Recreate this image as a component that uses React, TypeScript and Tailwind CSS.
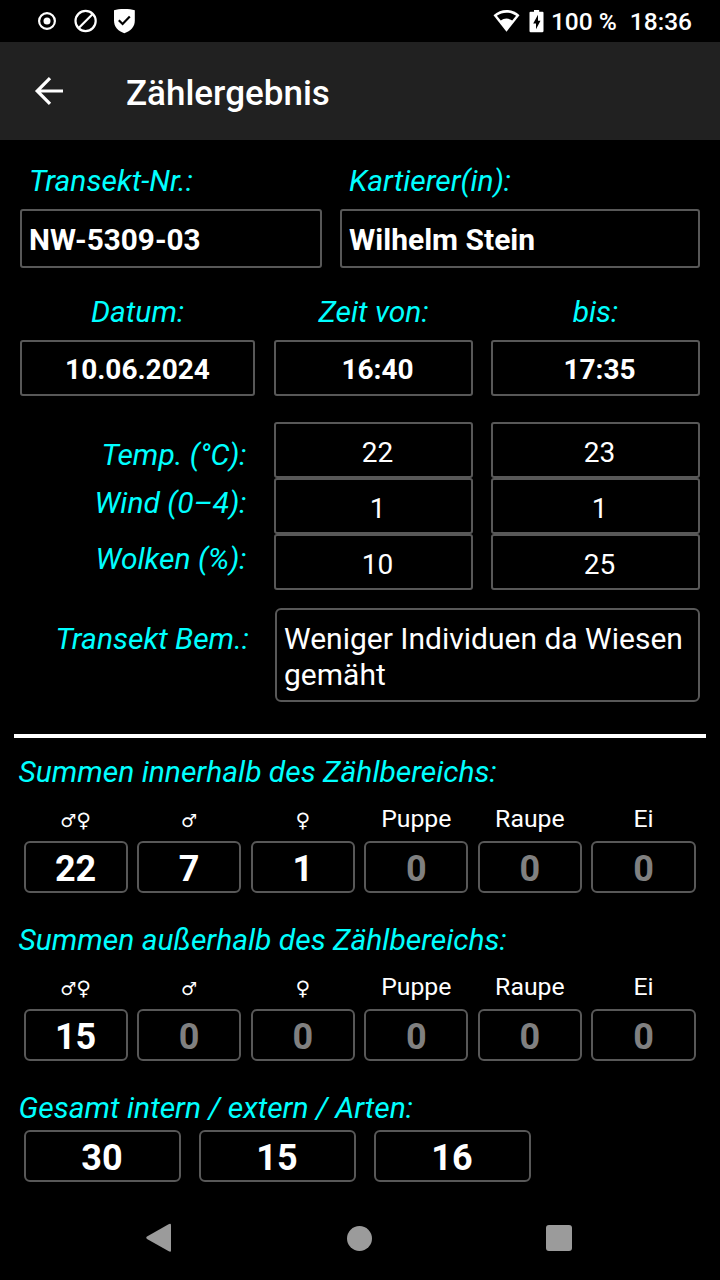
import type { ReactNode } from "react";

function Label({ children, className = "" }: { children: ReactNode; className?: string }) {
  return (
    <div className={`whitespace-nowrap text-[30px] leading-9 italic text-[#00ffff] ${className}`}>
      {children}
    </div>
  );
}

function Field({ children, className = "" }: { children: ReactNode; className?: string }) {
  return (
    <div className={`flex items-center rounded-[3px] border-2 border-[#585858] ${className}`}>
      {children}
    </div>
  );
}

function StatusBar() {
  return (
    <div className="flex h-[42px] items-center justify-between pr-7 pl-9">
      <svg width="104" height="42" viewBox="36 0 104 42" fill="none" stroke="white">
        <circle cx="47" cy="21" r="7.900" strokeWidth="2.2" />
        <circle cx="47" cy="21" r="3.5" fill="white" stroke="none" />
        <circle cx="85.6" cy="21" r="10.1" strokeWidth="2.2" />
        <path d="M78.5 28.2 92.7 14" strokeWidth="2.2" />
        <path
          d="M124.3 9C120 9 116.500 9.500 114 10.200V20.500C114 27 118 31 124.300 33.200C130.600 31 134.800 27 134.800 20.500V10.200C132 9.500 128.600 9 124.300 9Z"
          fill="white"
          stroke="none"
        />
        <path d="M118.8 20.300 122.600 24 129.800 16.600" stroke="black" strokeWidth="2.2" />
      </svg>
      <div className="flex items-center">
        <svg width="54" height="42" viewBox="491.500 0 54 42">
          <path d="M494 15.300C501.500 8.300 512.500 8.300 520 15.300L507 31.700Z" fill="white" />
          <path d="M497.400 15.800C503 11.600 511 11.600 516.600 15.800L512.700 20.600C509.500 17.800 504.500 17.800 501.300 20.600Z" fill="black" />
          <path
            d="M534.500 10V11.800H531Q530 11.800 530 12.800V31Q530 32.300 531.200 32.300H542.600Q544 32.300 544 31V12.800Q544 11.800 543 11.800H539.700V10Z"
            fill="white"
          />
          <path d="M538.500 14.800 533.700 23.500H536.500V29.300L541 20.800H538.500Z" fill="black" />
        </svg>
        <div className="ml-[6px] pt-[2px] text-[24.5px] leading-[42px] font-medium whitespace-pre">100 %</div>
        <div className="ml-[13px] pt-[2px] text-[24.5px] leading-[42px] font-medium">18:36</div>
      </div>
    </div>
  );
}

function AppBar() {
  return (
    <div className="flex h-[98px] items-center bg-[#212121] pl-[34px]">
      <svg width="30" height="30" viewBox="0 -1 30 30" fill="none" stroke="white" strokeWidth="3.2">
        <path d="M29 14H3M16 1.200 3.200 14 16 26.800" />
      </svg>
      <h1 className="ml-[62px] pt-1.5 text-[35px] leading-[92px] font-medium">Zählergebnis</h1>
    </div>
  );
}

const male = <span className="font-['DejaVu_Sans',sans-serif] text-[18px]">♂</span>;
const female = <span className="font-['DejaVu_Sans',sans-serif] text-[20px]">♀</span>;
const stages: ReactNode[] = [
  <>
    {male}
    {female}
  </>,
  male,
  female,
  "Puppe",
  "Raupe",
  "Ei",
];

function Sums({ title, values }: { title: string; values: number[] }) {
  return (
    <section className="h-[168px]">
      <Label className="pl-[18.500px]">{title}</Label>
      <div className="grid grid-cols-6 gap-x-[9.500px] pr-[24.500px] pl-[23.500px]">
        {stages.map((stage, i) => (
          <div key={i}>
            <div className="h-[51px] text-center text-[24.800px] leading-[58px]">{stage}</div>
            <div
              className={`flex h-[52px] items-center justify-center rounded-md border-2 border-[#585858] pt-[3px] text-[36px] font-bold ${values[i] ? "text-white" : "text-[#808080]"}`}
            >
              {values[i]}
            </div>
          </div>
        ))}
      </div>
    </section>
  );
}

const weather = [
  ["22", "23"],
  ["1", "1"],
  ["10", "25"],
];

export default function App() {
  return (
    <div className="flex h-[1280px] w-[720px] flex-col overflow-hidden bg-black font-['Roboto',sans-serif] text-white">
      <StatusBar />
      <AppBar />

      <div className="grid grid-cols-[302px_360px] gap-x-[18px] px-5 pt-[23px]">
        <Label className="h-[46px] pl-[9px]">Transekt-Nr.:</Label>
        <Label className="h-[46px] pl-[9px]">Kartierer(in):</Label>
        <Field className="h-[59px] pt-[3px] pl-[7px] text-[29.700px] font-bold">NW-5309-03</Field>
        <Field className="h-[59px] pt-0.5 pl-[7px] text-[30px] font-bold">Wilhelm Stein</Field>
      </div>

      <div className="grid grid-cols-[235px_199px_209px] gap-x-[18.500px] px-5 pt-[26px] text-center">
        <Label className="h-[46px]">Datum:</Label>
        <Label className="h-[46px] pl-px">Zeit von:</Label>
        <Label className="h-[46px]">bis:</Label>
        <Field className="h-14 justify-center pt-[3px] text-[28px] font-bold">10.06.2024</Field>
        <Field className="h-14 justify-center pt-[3px] pl-[9px] text-[28px] font-bold">16:40</Field>
        <Field className="h-14 justify-center pt-[3px] pl-2 text-[28px] font-bold">17:35</Field>
      </div>

      <div className="flex justify-between px-5 pt-[26px]">
        <div className="w-[226.500px] pt-[15px] text-right">
          <Label className="h-12">Temp. (°C):</Label>
          <Label className="h-14">Wind (0–4):</Label>
          <Label>Wolken (%):</Label>
        </div>
        <div className="grid grid-cols-[199px_209px] gap-x-[18px]">
          {weather.flat().map((v, i) => (
            <Field key={i} className="h-14 justify-center pt-[5px] pl-2 text-[28px]">
              {v}
            </Field>
          ))}
        </div>
      </div>

      <div className="flex justify-between px-5 pt-[18px]">
        <Label className="w-[229px] pt-[13px] text-right">Transekt Bem.:</Label>
        <div className="h-[94px] w-[425px] rounded-md border-2 border-[#585858] pr-1 pl-[7px] pt-[11px] text-[30px] leading-9">
          Weniger Individuen da Wiesen gemäht
        </div>
      </div>

      <div className="mx-[14px] mt-8 mb-4 h-[4px] shrink-0 bg-white" />

      <Sums title="Summen innerhalb des Zählbereichs:" values={[22, 7, 1, 0, 0, 0]} />
      <Sums title="Summen außerhalb des Zählbereichs:" values={[15, 0, 0, 0, 0, 0]} />
      <section>
        <Label className="h-10 pl-[18.500px]">Gesamt intern / extern / Arten:</Label>
        <div className="flex gap-[18px] pl-[23.500px]">
          {[30, 15, 16].map((n) => (
            <div
              key={n}
              className="flex h-[52px] w-[157px] items-center justify-center rounded-md border-2 border-[#585858] pt-[3px] text-[36px] font-bold"
            >
              {n}
            </div>
          ))}
        </div>
      </section>

      <div className="mt-auto flex h-[84px] items-center justify-between pr-[148px] pl-[146px]">
        <svg width="26" height="30" viewBox="0 0 26 30" fill="#9b9b9b">
          <path d="M1 13.600 22.600 1.200Q25 0 25 2.200V27.400Q25 29.500 22.800 28.300L1 16Q-.5 14.800 1 13.600Z" />
        </svg>
        <div className="size-[25px] rounded-full bg-[#9b9b9b]" />
        <div className="size-[26px] rounded-[3px] bg-[#9b9b9b]" />
      </div>
    </div>
  );
}
